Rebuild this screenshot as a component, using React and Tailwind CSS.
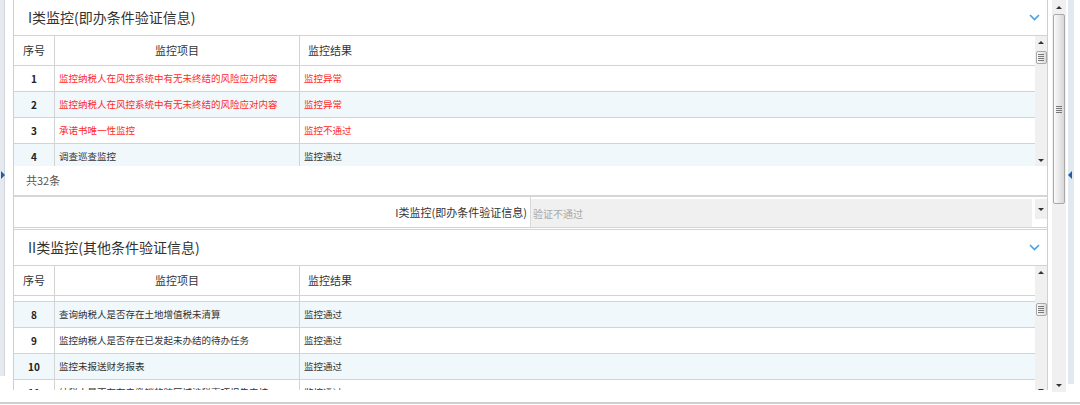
const FONT = "font-['Microsoft_YaHei','Noto_Sans_CJK_SC',sans-serif]";

const sec1 = [
  { no: 1, item: '监控纳税人在风控系统中有无未终结的风险应对内容', res: '监控异常', red: true },
  { no: 2, item: '监控纳税人在风控系统中有无未终结的风险应对内容', res: '监控异常', red: true },
  { no: 3, item: '承诺书唯一性监控', res: '监控不通过', red: true },
  { no: 4, item: '调查巡查监控', res: '监控通过' },
];

const sec2 = [
  { no: 8, item: '查询纳税人是否存在土地增值税未清算', res: '监控通过' },
  { no: 9, item: '监控纳税人是否存在已发起未办结的待办任务', res: '监控通过' },
  { no: 10, item: '监控未报送财务报表', res: '监控通过' },
  { no: 11, item: '纳税人是否存在未缴销的跨区域涉税事项报告表核', res: '监控通过' },
];

function UpTri() {
  return <div className="w-0 h-0 border-l-[3px] border-r-[3px] border-b-[3px] border-l-transparent border-r-transparent border-b-[#333]" />;
}
function DownTri() {
  return <div className="w-0 h-0 border-l-[3px] border-r-[3px] border-t-[3px] border-l-transparent border-r-transparent border-t-[#333]" />;
}

function Thumb({ h }) {
  return (
    <div className={`w-[11px] ${h} rounded-[2px] border border-[#a9a9a9] bg-gradient-to-r from-[#fafafa] to-[#dcdcdc] flex flex-col items-center justify-center gap-[1px]`}>
      <div className="w-[6px] h-px bg-[#777]" />
      <div className="w-[6px] h-px bg-[#777]" />
      <div className="w-[6px] h-px bg-[#777]" />
      <div className="w-[6px] h-px bg-[#777]" />
    </div>
  );
}

function InnerScroll({ thumbTop }) {
  return (
    <div className="w-[12px] h-full bg-[#f0f0f0] flex flex-col items-center shrink-0">
      <div className="h-[13px] flex items-center"><UpTri /></div>
      <div className={thumbTop}><Thumb h="h-[13px]" /></div>
      <div className="flex-1" />
      <div className="h-[12px] flex items-center"><DownTri /></div>
    </div>
  );
}

function Chevron() {
  return (
    <svg width="11" height="7" viewBox="0 0 11 7" className="mr-[7px]">
      <path d="M1 1 L5.5 5.5 L10 1" fill="none" stroke="#4a9fe3" strokeWidth="1.6" />
    </svg>
  );
}

function Header() {
  return (
    <div className="flex h-[30px] border-b border-[#d3d3d3] text-[11px] text-[#333] items-center">
      <div className="w-[41px] h-full border-r border-[#d3d3d3] flex items-center justify-center">序号</div>
      <div className="w-[245px] h-full border-r border-[#d3d3d3] flex items-center justify-center">监控项目</div>
      <div className="flex-1 h-full flex items-center pl-[8px]">监控结果</div>
    </div>
  );
}

function Row({ r, alt, h = 'h-[26px]' }) {
  const color = r && r.red ? 'text-[#ff2a2a]' : 'text-[#333]';
  return (
    <div className={`flex ${h} border-b border-[#d3d3d3] ${alt ? 'bg-[#f0f8fc]' : 'bg-white'} text-[9.5px] overflow-hidden`}>
      <div className="w-[41px] h-full border-r border-[#d3d3d3] flex items-center justify-center font-bold text-[10px] text-[#222]">{r && r.no}</div>
      <div className={`w-[245px] h-full border-r border-[#d3d3d3] flex items-center pl-[4px] whitespace-nowrap ${color}`}>{r && r.item}</div>
      <div className={`flex-1 h-full flex items-center pl-[4px] whitespace-nowrap ${color}`}>{r && r.res}</div>
    </div>
  );
}

function SectionTitle({ text }) {
  return (
    <div className="h-[36px] border-b border-[#d3d3d3] flex items-center justify-between pl-[14px] shrink-0">
      <span className="text-[14px] text-[#333]">{text}</span>
      <Chevron />
    </div>
  );
}

export default function App() {
  return (
    <div className={`w-[1080px] h-[405px] bg-white overflow-hidden flex flex-col ${FONT}`}>
      <div className="flex h-[402px]">
        <div className="w-[5px] h-[376px] bg-[#e6e9ed] border-r border-[#cfd5db] flex flex-col">
          <div className="h-[171px]" />
          <div className="w-0 h-0 border-t-[4px] border-b-[4px] border-l-[4px] border-t-transparent border-b-transparent border-l-[#1e5fa8] ml-[1px]" />
        </div>
        <div className="w-[8px]" />
        <div className="w-[1035px] h-[390px] border-l border-r border-[#cfcfcf] overflow-hidden flex flex-col">
          <SectionTitle text="I类监控(即办条件验证信息)" />
          <div className="flex h-[130px] shrink-0">
            <div className="flex-1 overflow-hidden">
              <Header />
              {sec1.map((r, i) => <Row key={r.no} r={r} alt={i % 2 === 1} />)}
            </div>
            <InnerScroll thumbTop="mt-[2px]" />
          </div>
          <div className="h-[31px] border-b-2 border-[#d6d6d6] flex items-center pl-[12px] text-[11px] text-[#555] shrink-0">共32条</div>
          <div className="h-[31px] border-b border-[#d3d3d3] flex shrink-0">
            <div className="w-[517px] border-r border-[#d8d8d8] flex items-center justify-end pr-[3px] text-[11px] text-[#333] whitespace-nowrap">I类监控(即办条件验证信息)</div>
            <div className="flex-1 flex pt-[2px]">
              <div className="flex-1 bg-[#f0f0f0] flex items-center pl-[2px] text-[10px] text-[#a8a8a8] h-[28px]">验证不通过</div>
              <div className="w-[3px]" />
              <div className="w-[12px] h-[20px] bg-[#efefef] flex items-center justify-center"><DownTri /></div>
            </div>
          </div>
          <div className="h-px shrink-0" />
          <div className="border-t border-[#d3d3d3] flex flex-col shrink-0">
            <SectionTitle text="II类监控(其他条件验证信息)" />
            <div className="flex h-[130px]">
              <div className="flex-1 overflow-hidden">
                <Header />
                <Row h="h-[6px]" />
                {sec2.map((r, i) => <Row key={r.no} r={r} alt={i % 2 === 0} />)}
              </div>
              <InnerScroll thumbTop="mt-[24px]" />
            </div>
          </div>
        </div>
        <div className="w-[4px]" />
        <div className="w-[14px] h-[392px] bg-[#f0f0f0] flex flex-col items-center">
          <div className="h-[14px] flex items-center"><UpTri /></div>
          <div className="w-[12px] h-[190px] rounded-[2px] border border-[#a9a9a9] bg-gradient-to-r from-[#fafafa] to-[#d8d8d8] flex flex-col items-center justify-center gap-[1px]">
            <div className="w-[6px] h-px bg-[#777]" />
            <div className="w-[6px] h-px bg-[#777]" />
            <div className="w-[6px] h-px bg-[#777]" />
            <div className="w-[6px] h-px bg-[#777]" />
          </div>
          <div className="flex-1" />
          <div className="h-[14px] flex items-center"><DownTri /></div>
        </div>
        <div className="w-[2px]" />
        <div className="w-[6px] h-[384px] bg-[#e2e8ef] flex flex-col">
          <div className="h-[171px]" />
          <div className="w-0 h-0 border-t-[4px] border-b-[4px] border-r-[4px] border-t-transparent border-b-transparent border-r-[#1e5fa8]" />
        </div>
      </div>
      <div className="h-[2px] bg-[#cfcfcf]" />
    </div>
  );
}
